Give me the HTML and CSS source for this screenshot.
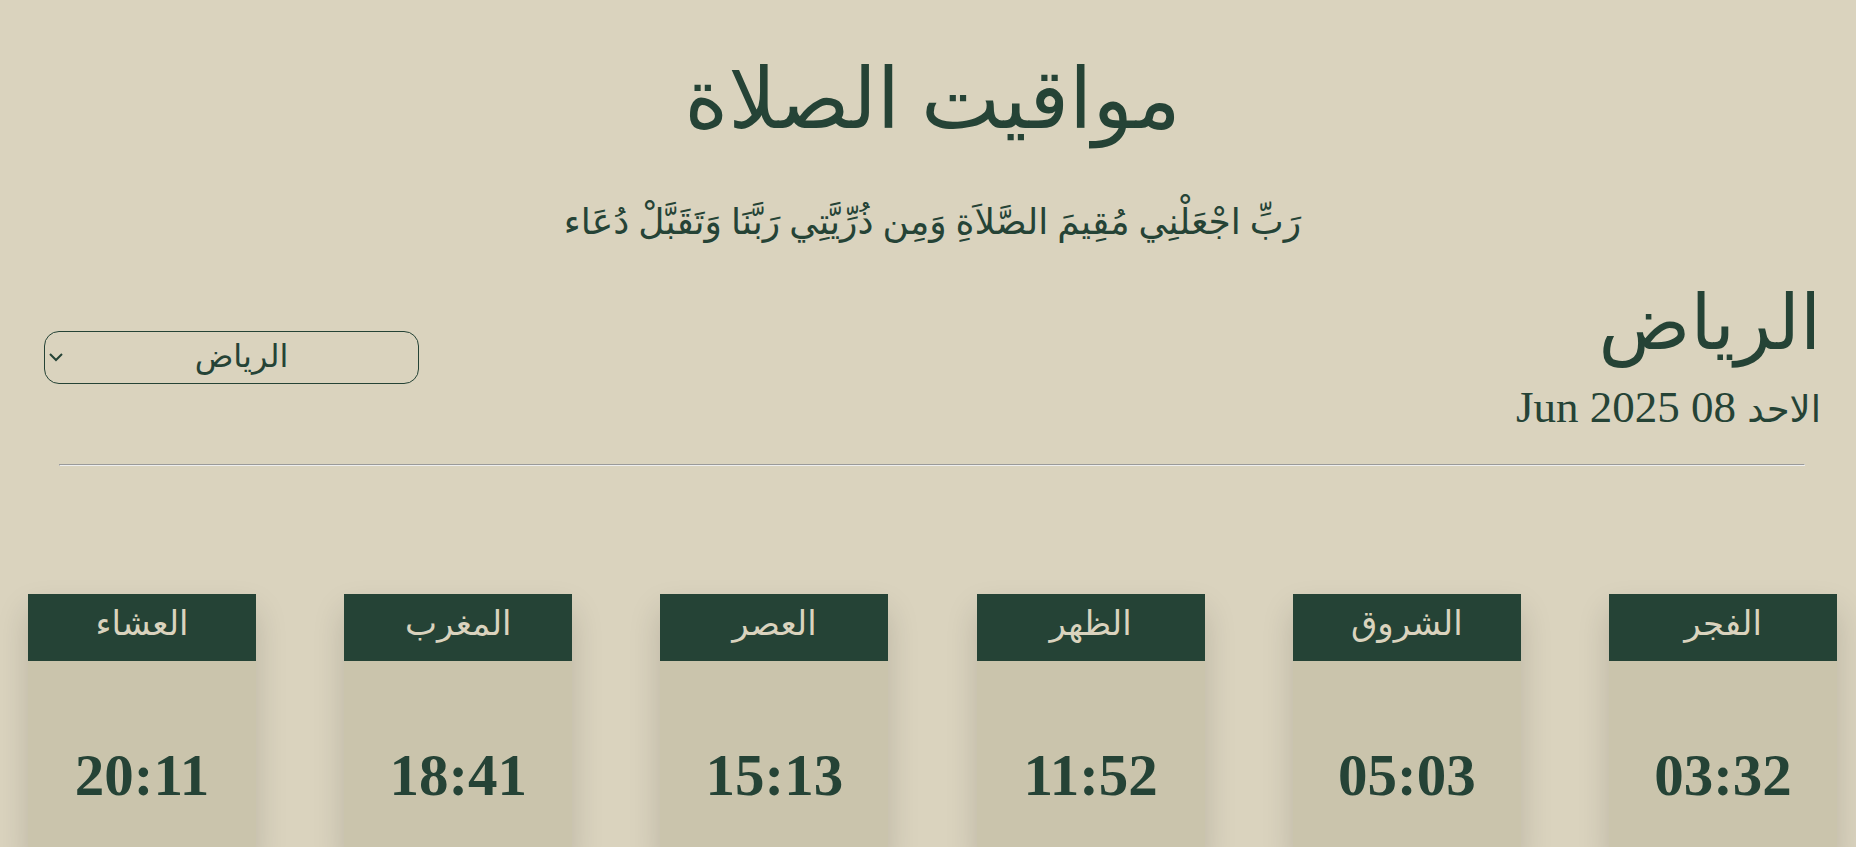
FILE: index.html
```html
<!DOCTYPE html>
<html lang="ar" dir="rtl">
<head>
<meta charset="utf-8">
<title>مواقيت الصلاة</title>
<link rel="stylesheet" href="styles.css">
</head>
<body>
<header class="intro">
<h1 class="title">مواقيت الصلاة</h1>
<p class="verse">رَبِّ اجْعَلْنِي مُقِيمَ الصَّلاَةِ وَمِن ذُرِّيَّتِي رَبَّنَا وَتَقَبَّلْ دُعَاء</p>
</header>
<section class="bar">
<div class="place">
<h2 class="city">الرياض</h2>
<p class="date"><span class="day">الاحد</span> 08 Jun 2025</p>
</div>
<div class="picker">
<select class="select" aria-label="المدينة"><option>الرياض</option></select>
<svg class="chevron" viewBox="0 0 16 16" aria-hidden="true"><path d="M2 5 8 11 14 5"/></svg>
</div>
</section>
<hr class="rule">
<main class="cards">
<article class="card"><h3 class="name">الفجر</h3><p class="time">03:32</p></article>
<article class="card"><h3 class="name">الشروق</h3><p class="time">05:03</p></article>
<article class="card"><h3 class="name">الظهر</h3><p class="time">11:52</p></article>
<article class="card"><h3 class="name">العصر</h3><p class="time">15:13</p></article>
<article class="card"><h3 class="name">المغرب</h3><p class="time">18:41</p></article>
<article class="card"><h3 class="name">العشاء</h3><p class="time">20:11</p></article>
</main>
</body>
</html>
```
FILE: styles.css
```css
* { box-sizing: border-box; margin: 0; padding: 0; }
html { scrollbar-width: none; }
body {
  padding: 0 19px 0 28px;
  background: #dad3be;
  color: #254336;
  font-family: "Liberation Serif", "DejaVu Sans", serif;
}
.intro { padding-top: 40px; text-align: center; }
.title { font-size: 84px; line-height: 120px; font-weight: 400; }
.verse { margin-top: 32px; font-size: 36px; line-height: 60px; }
.bar {
  display: flex;
  justify-content: space-between;
  align-items: center;
  padding: 23px 16px 0;
}
.city { font-size: 76px; line-height: 96px; font-weight: 400; }
.date { padding-top: 6px; font-size: 45px; line-height: 60px; }
.day { font-size: 37px; }
.picker { position: relative; width: 375px; }
.select {
  display: block;
  appearance: none;
  width: 100%;
  height: 53px;
  border: 1px solid #254336;
  border-radius: 15px;
  background: transparent;
  color: inherit;
  font: 32px/40px "Liberation Serif", "DejaVu Sans", serif;
  text-align: center;
  text-align-last: center;
  padding: 0 0 4px 20px;
}
.chevron {
  position: absolute;
  left: 4px;
  top: 18px;
  width: 16px;
  height: 16px;
  fill: none;
  stroke: #254336;
  stroke-width: 2;
}
.rule {
  margin: 24px 32px 0 31px;
  border: 1px solid;
  border-color: #9a9a9a #eeeeee #eeeeee #9a9a9a;
}
.cards {
  display: flex;
  justify-content: space-between;
  padding: 128px 0 60px;
}
.card {
  width: 228px;
  height: 264px;
  border-radius: 0 0 15px 15px;
  background: #cac4ac;
  box-shadow: 0 16px 32px rgba(0, 0, 0, 0.15);
  text-align: center;
}
.name {
  background: #254336;
  color: #dad3be;
  font-size: 34px;
  line-height: 60px;
  padding-bottom: 7px;
  font-weight: 400;
}
.time { margin-top: 78px; font-size: 59px; line-height: 72px; font-weight: 700; }
```
